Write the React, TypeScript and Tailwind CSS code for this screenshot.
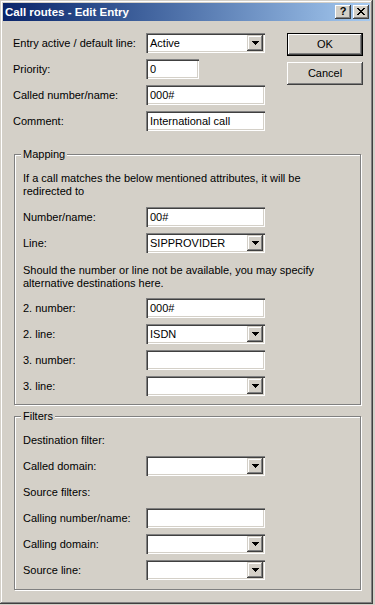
import React from "react";

// classic win32 bevels
const frame =
  "shadow-[inset_-1px_-1px_0_#404040,inset_1px_1px_0_#d4d0c8,inset_-2px_-2px_0_#808080,inset_2px_2px_0_#fff]";
const sunken =
  "shadow-[inset_1px_1px_0_#808080,inset_2px_2px_0_#404040,inset_-1px_-1px_0_#fff,inset_-2px_-2px_0_#d4d0c8]";
const raised =
  "shadow-[inset_-1px_-1px_0_#404040,inset_1px_1px_0_#fff,inset_-2px_-2px_0_#808080]";
const smallRaised =
  "shadow-[inset_-1px_-1px_0_#404040,inset_1px_1px_0_#d4d0c8,inset_-2px_-2px_0_#808080,inset_2px_2px_0_#fff]";

function Arrow() {
  return (
    <svg width="7" height="4" viewBox="0 0 7 4" shapeRendering="crispEdges">
      <rect x="0" y="0" width="7" height="1" fill="#000" />
      <rect x="1" y="1" width="5" height="1" fill="#000" />
      <rect x="2" y="2" width="3" height="1" fill="#000" />
      <rect x="3" y="3" width="1" height="1" fill="#000" />
    </svg>
  );
}

function CloseGlyph() {
  const rows = [
    [0, 1, 6, 7],
    [1, 2, 5, 6],
    [2, 3, 4, 5],
    [3, 4],
    [2, 3, 4, 5],
    [1, 2, 5, 6],
    [0, 1, 6, 7],
  ];
  return (
    <svg width="8" height="7" viewBox="0 0 8 7" shapeRendering="crispEdges">
      {rows.map((cols, y) =>
        cols.map((x) => <rect key={`${x}-${y}`} x={x} y={y} width="1" height="1" fill="#000" />)
      )}
    </svg>
  );
}

function Edit({ value = "", narrow = false }: { value?: string; narrow?: boolean }) {
  return (
    <div
      className={`${narrow ? "w-[53px]" : "w-[119px]"} h-[20px] bg-white ${sunken} flex items-center pl-[4px] whitespace-nowrap`}
    >
      {value}
    </div>
  );
}

function Combo({ value = "" }: { value?: string }) {
  return (
    <div className={`w-[119px] h-[20px] bg-white ${sunken} flex items-center pl-[4px] pr-[2px]`}>
      <span className="whitespace-nowrap">{value}</span>
      <div className={`ml-auto w-[16px] h-[16px] bg-[#d4d0c8] ${smallRaised} flex items-center justify-center`}>
        <Arrow />
      </div>
    </div>
  );
}

function Row({ label, labelW, children }: { label: string; labelW: string; children: React.ReactNode }) {
  return (
    <div className="flex items-center h-[20px]">
      <span className={`${labelW} pt-[1px] whitespace-nowrap`}>{label}</span>
      {children}
    </div>
  );
}

function Group({ title, children, className }: { title: string; children: React.ReactNode; className: string }) {
  return (
    <div
      className={`ml-[11px] w-[347px] border border-[#808080] shadow-[inset_1px_1px_0_#fff,1px_1px_0_#fff] pl-[8px] ${className}`}
    >
      <div className="-mt-[7px] -ml-[2px] px-[2px] w-fit h-[13px] leading-[13px] bg-[#d4d0c8]">{title}</div>
      {children}
    </div>
  );
}

export default function App() {
  const gl = "w-[123px]";
  return (
    <div className="w-[375px] h-[605px] bg-[#d4d0c8] text-[11px] leading-[13px] text-black font-['Liberation_Sans',Arial,sans-serif]">
      <div className={`w-[373px] h-[604px] p-[3px] bg-[#d4d0c8] ${frame} flex flex-col`}>
        {/* title bar */}
        <div className="h-[18px] flex items-center bg-gradient-to-r from-[#0a246a] to-[#a6caf0] pl-[2px] pr-[1px]">
          <span className="text-white font-bold text-[11.5px] whitespace-nowrap">Call routes - Edit Entry</span>
          <div className="ml-auto flex gap-[2px]">
            <div className={`w-[16px] h-[14px] bg-[#d4d0c8] ${raised} flex items-center justify-center font-bold text-[11px] leading-[11px] pb-[1px]`}>
              ?
            </div>
            <div className={`w-[16px] h-[14px] bg-[#d4d0c8] ${raised} flex items-center justify-center pb-[1px]`}>
              <CloseGlyph />
            </div>
          </div>
        </div>

        {/* top fields + buttons */}
        <div className="pt-[12px] pl-[10px] flex">
          <div className="flex flex-col gap-[6px]">
            <Row label="Entry active / default line:" labelW="w-[133px]">
              <Combo value="Active" />
            </Row>
            <Row label="Priority:" labelW="w-[133px]">
              <Edit value="0" narrow />
            </Row>
            <Row label="Called number/name:" labelW="w-[133px]">
              <Edit value="000#" />
            </Row>
            <Row label="Comment:" labelW="w-[133px]">
              <Edit value="International call" />
            </Row>
          </div>
          <div className="ml-[22px] flex flex-col gap-[6px]">
            <div className="w-[76px] h-[23px] border border-black">
              <div className={`w-full h-full ${raised} flex items-center justify-center`}>OK</div>
            </div>
            <div className={`w-[76px] h-[23px] ${raised} flex items-center justify-center`}>Cancel</div>
          </div>
        </div>

        <Group title="Mapping" className="mt-[23px] pb-[8px]">
          <p className="mt-[11px] whitespace-nowrap">
            If a call matches the below mentioned attributes, it will be
            <br />
            redirected to
          </p>
          <div className="mt-[9px]">
            <Row label="Number/name:" labelW={gl}>
              <Edit value="00#" />
            </Row>
          </div>
          <div className="mt-[6px]">
            <Row label="Line:" labelW={gl}>
              <Combo value="SIPPROVIDER" />
            </Row>
          </div>
          <p className="mt-[11px] whitespace-nowrap">
            Should the number or line not be available, you may specify
            <br />
            alternative destinations here.
          </p>
          <div className="mt-[8px] flex flex-col gap-[6px]">
            <Row label="2. number:" labelW={gl}>
              <Edit value="000#" />
            </Row>
            <Row label="2. line:" labelW={gl}>
              <Combo value="ISDN" />
            </Row>
            <Row label="3. number:" labelW={gl}>
              <Edit />
            </Row>
            <Row label="3. line:" labelW={gl}>
              <Combo />
            </Row>
          </div>
        </Group>

        <Group title="Filters" className="mt-[11px] pb-[9px]">
          <p className="mt-[11px]">Destination filter:</p>
          <div className="mt-[9px]">
            <Row label="Called domain:" labelW={gl}>
              <Combo />
            </Row>
          </div>
          <p className="mt-[10px]">Source filters:</p>
          <div className="mt-[9px] flex flex-col gap-[6px]">
            <Row label="Calling number/name:" labelW={gl}>
              <Edit />
            </Row>
            <Row label="Calling domain:" labelW={gl}>
              <Combo />
            </Row>
            <Row label="Source line:" labelW={gl}>
              <Combo />
            </Row>
          </div>
        </Group>
      </div>
    </div>
  );
}
